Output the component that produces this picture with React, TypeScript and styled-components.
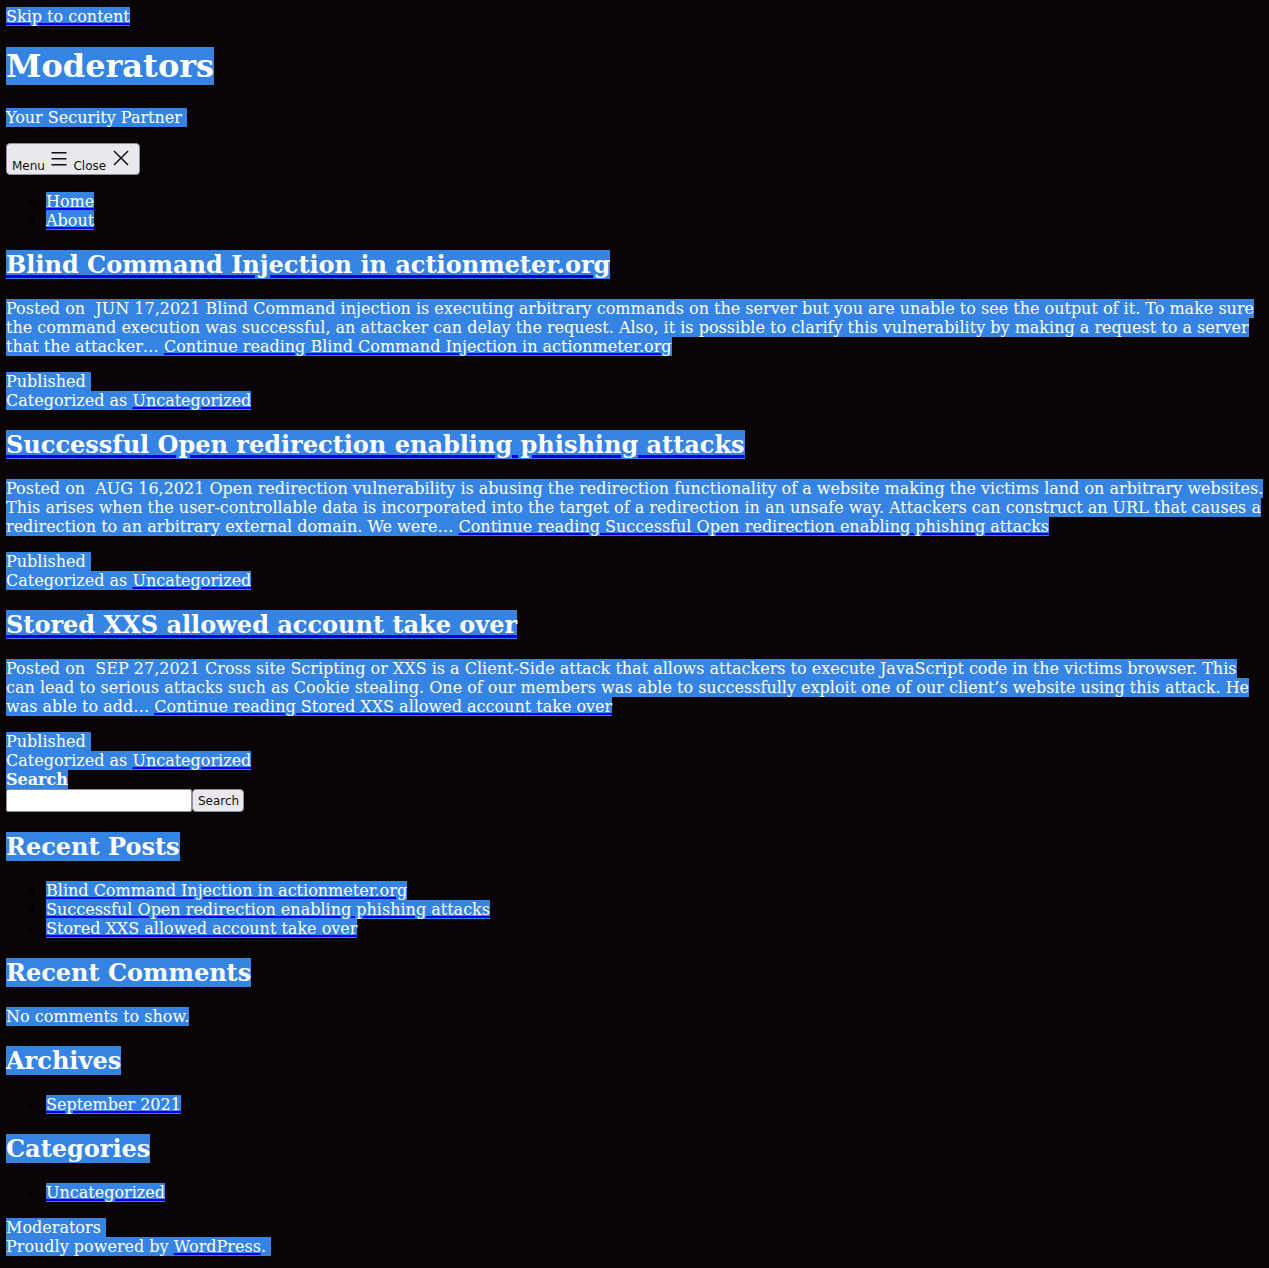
import { createGlobalStyle, styled } from "styled-components";

const SEL = "#3584e4";
const LINK = "#0000ee";

const GlobalStyle = createGlobalStyle`
  body {
    margin: 0;
    background: #080404;
    color: #000;
    font-family: "DejaVu Serif", "Liberation Serif", serif;
    font-size: 16px;
    line-height: 19px;
  }
`;

const Page = styled.div`
  padding: 7px 2px 12px 6px;
`;

const Hl = styled.span`
  background: ${SEL};
  color: #fff;
`;

const Link = styled.a<{ $thick?: number }>`
  background: ${SEL};
  color: #fff;
  text-decoration-line: underline;
  text-decoration-style: solid;
  text-decoration-color: ${LINK};
  text-decoration-thickness: ${({ $thick }) => $thick ?? 1.5}px;
`;

const SkipRow = styled.div``;

const SiteTitle = styled.h1`
  margin: 21px 0 22px;
  font-size: 32px;
  line-height: 39px;
  font-weight: 700;
`;

const Tagline = styled.p`
  margin: 0 0 16px;
`;

const MenuButton = styled.button`
  display: inline-block;
  margin: 0;
  padding: 2px 4px 1px 5px;
  border: 1px solid #8f8f9d;
  border-radius: 4px;
  background: #e9e9ed;
  color: #111;
  font-family: "DejaVu Sans", "Noto Sans", sans-serif;
  font-size: 12px;
  line-height: 14px;

  svg {
    vertical-align: baseline;
    margin: 0 2px 0 2.5px;
  }
`;

const BulletList = styled.ul<{ $top?: number }>`
  margin: ${({ $top }) => $top ?? 16}px 0 16px;
  padding-left: 40px;
  list-style: disc;
`;

const PostTitle = styled.h2`
  margin: 20px 0;
  font-size: 24px;
  line-height: 29px;
  font-weight: 700;
`;

const Excerpt = styled.p`
  margin: 0 0 16px;
`;

const PostMeta = styled.footer`
  div {
    display: block;
  }
`;

const SearchLabel = styled.label`
  display: block;
  font-weight: 700;
`;

const SearchRow = styled.div`
  display: flex;
  align-items: stretch;
  height: 23px;
`;

const SearchInput = styled.input`
  box-sizing: border-box;
  width: 186px;
  height: 23px;
  margin: 0;
  border: 1px solid #8f8f9d;
  border-radius: 2px;
  background: #fff;
`;

const SearchButton = styled.button`
  box-sizing: border-box;
  height: 23px;
  margin: 0;
  padding: 0 4px 0 5px;
  border: 1px solid #8f8f9d;
  border-radius: 4px;
  background: #e9e9ed;
  color: #111;
  font-family: "DejaVu Sans", "Noto Sans", sans-serif;
  font-size: 12px;
`;

const WidgetTitle = styled.h2`
  margin: 20px 0;
  font-size: 24px;
  line-height: 29px;
  font-weight: 700;
`;

const WidgetText = styled.p`
  margin: 0 0 20px;
`;

const SiteFooter = styled.footer`
  div {
    display: block;
  }
`;

function Hamburger() {
  return (
    <svg width="24" height="24" viewBox="0 0 24 24" aria-hidden="true">
      <path
        fillRule="evenodd"
        d="M4.5 6H19.5V7.5H4.5V6ZM4.5 12H19.5V13.5H4.5V12ZM19.5 18H4.5V19.5H19.5V18Z"
        fill="currentColor"
      />
    </svg>
  );
}

function CloseIcon() {
  return (
    <svg width="24" height="24" viewBox="0 0 24 24" aria-hidden="true">
      <path
        fillRule="evenodd"
        d="M12 10.9394L5.53033 4.46973L4.46967 5.53039L10.9393 12.0001L4.46967 18.4697L5.53033 19.5304L12 13.0607L18.4697 19.5304L19.5303 18.4697L13.0607 12.0001L19.5303 5.53039L18.4697 4.46973L12 10.9394Z"
        fill="currentColor"
      />
    </svg>
  );
}

const posts = [
  {
    title: "Blind Command Injection in actionmeter.org",
    date: "JUN 17,2021",
    text: "Blind Command injection is executing arbitrary commands on the server but you are unable to see the output of it. To make sure the command execution was successful, an attacker can delay the request. Also, it is possible to clarify this vulnerability by making a request to a server that the attacker…",
  },
  {
    title: "Successful Open redirection enabling phishing attacks",
    date: "AUG 16,2021",
    text: "Open redirection vulnerability is abusing the redirection functionality of a website making the victims land on arbitrary websites. This arises when the user-controllable data is incorporated into the target of a redirection in an unsafe way. Attackers can construct an URL that causes a redirection to an arbitrary external domain. We were…",
  },
  {
    title: "Stored XXS allowed account take over",
    date: "SEP 27,2021",
    text: "Cross site Scripting or XXS is a Client-Side attack that allows attackers to execute JavaScript code in the victims browser. This can lead to serious attacks such as Cookie stealing. One of our members was able to successfully exploit one of our client’s website using this attack. He was able to add…",
  },
];

export default function App() {
  return (
    <>
      <GlobalStyle />
      <Page>
        <SkipRow>
          <Link href="#content">Skip to content</Link>
        </SkipRow>

        <header>
          <SiteTitle>
            <Hl>Moderators</Hl>
          </SiteTitle>
          <Tagline>
            <Hl>Your Security Partner{"\u00a0"}</Hl>
          </Tagline>
          <nav>
            <MenuButton type="button">
              Menu
              <Hamburger />
              Close
              <CloseIcon />
            </MenuButton>
            <BulletList $top={17}>
              <li>
                <Link href="#">Home</Link>
              </li>
              <li>
                <Link href="#">About</Link>
              </li>
            </BulletList>
          </nav>
        </header>

        <main id="content">
          {posts.map((p) => (
            <article key={p.title}>
              <PostTitle>
                <Link href="#" $thick={2.5}>
                  {p.title}
                </Link>
              </PostTitle>
              <Excerpt>
                <Hl>
                  Posted on{"\u00a0\u00a0"}
                  {p.date} {p.text}{" "}
                </Hl>
                <Link href="#">Continue reading {p.title}</Link>
              </Excerpt>
              <PostMeta>
                <div>
                  <Hl>Published{"\u00a0"}</Hl>
                </div>
                <div>
                  <Hl>Categorized as </Hl>
                  <Link href="#">Uncategorized</Link>
                </div>
              </PostMeta>
            </article>
          ))}
        </main>

        <aside>
          <form onSubmit={(e) => e.preventDefault()}>
            <SearchLabel htmlFor="s">
              <Hl>Search</Hl>
            </SearchLabel>
            <SearchRow>
              <SearchInput id="s" type="search" />
              <SearchButton type="submit">Search</SearchButton>
            </SearchRow>
          </form>

          <WidgetTitle>
            <Hl>Recent Posts</Hl>
          </WidgetTitle>
          <BulletList $top={0}>
            {posts.map((p) => (
              <li key={p.title}>
                <Link href="#">{p.title}</Link>
              </li>
            ))}
          </BulletList>

          <WidgetTitle>
            <Hl>Recent Comments</Hl>
          </WidgetTitle>
          <WidgetText>
            <Hl>No comments to show.</Hl>
          </WidgetText>

          <WidgetTitle>
            <Hl>Archives</Hl>
          </WidgetTitle>
          <BulletList $top={0}>
            <li>
              <Link href="#">September 2021</Link>
            </li>
          </BulletList>

          <WidgetTitle>
            <Hl>Categories</Hl>
          </WidgetTitle>
          <BulletList $top={0}>
            <li>
              <Link href="#">Uncategorized</Link>
            </li>
          </BulletList>
        </aside>

        <SiteFooter>
          <div>
            <Hl>Moderators{"\u00a0"}</Hl>
          </div>
          <div>
            <Hl>Proudly powered by </Hl>
            <Link href="#">WordPress</Link>
            <Hl>.{"\u00a0"}</Hl>
          </div>
        </SiteFooter>
      </Page>
    </>
  );
}
